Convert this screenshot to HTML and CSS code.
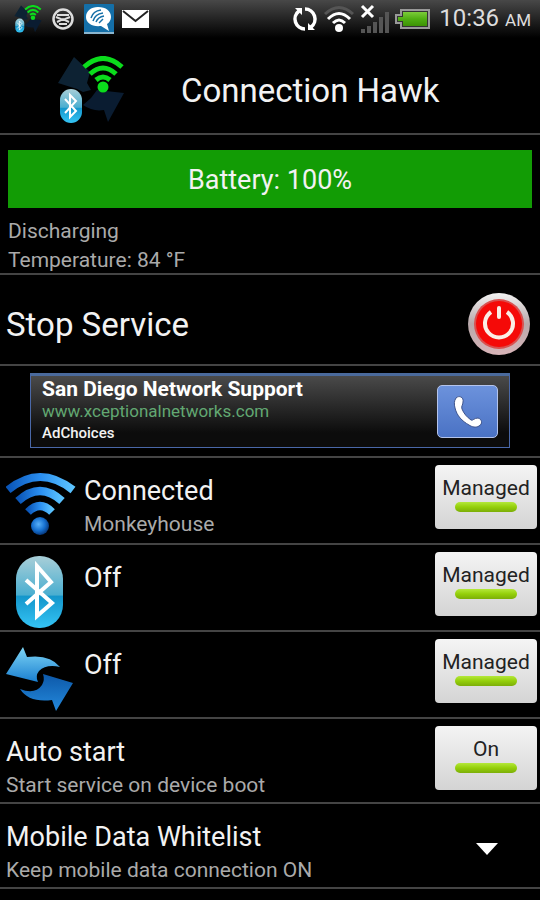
FILE: index.html
```html
<!DOCTYPE html>
<html lang="en">

<head>
    <meta charset="UTF-8">
    <meta name="viewport" content="width=device-width, initial-scale=1.0">
    <title>Connection Hawk</title>
    <link rel="stylesheet" href="styles.css">
</head>

<body>
    <!-- shared gradients and symbols -->
    <svg class="defs" width="0" height="0" aria-hidden="true">
        <defs>
            <linearGradient id="pill" x1="0" y1="0" x2="0" y2="1">
                <stop offset="0" stop-color="#a9cfd8" />
                <stop offset="0.54" stop-color="#4aaed0" />
                <stop offset="0.56" stop-color="#1496cb" />
                <stop offset="1" stop-color="#35c4f5" />
            </linearGradient>
            <linearGradient id="wave" x1="0" y1="0" x2="1" y2="0">
                <stop offset="0" stop-color="#0a55b8" />
                <stop offset="0.5" stop-color="#2a8ef0" />
                <stop offset="1" stop-color="#5cc4ff" />
            </linearGradient>
            <radialGradient id="ball" cx="0.42" cy="0.4" r="0.6">
                <stop offset="0" stop-color="#58b0f8" />
                <stop offset="0.6" stop-color="#1670d0" />
                <stop offset="1" stop-color="#073a80" />
            </radialGradient>
            <linearGradient id="arrowLight" x1="0" y1="0" x2="0" y2="1">
                <stop offset="0" stop-color="#7fd6f6" />
                <stop offset="1" stop-color="#1a7fd0" />
            </linearGradient>
            <linearGradient id="arrowDark" x1="0" y1="0" x2="0" y2="1">
                <stop offset="0" stop-color="#0d58a8" />
                <stop offset="1" stop-color="#2489dc" />
            </linearGradient>
            <linearGradient id="silver" x1="0" y1="0" x2="0" y2="1">
                <stop offset="0" stop-color="#f2f2f2" />
                <stop offset="0.5" stop-color="#b8a8aa" />
                <stop offset="1" stop-color="#d8b4b8" />
            </linearGradient>
            <linearGradient id="cell" x1="0" y1="0" x2="0" y2="1">
                <stop offset="0" stop-color="#7ccc3a" />
                <stop offset="0.5" stop-color="#4fae12" />
                <stop offset="1" stop-color="#3c9205" />
            </linearGradient>
            <symbol id="hawk" viewBox="0 0 68 68">
                <path d="M17 1 L33 16 L30 27 L34 34 L26 36 L20 33 L1 27 Z" fill="#0d2233" />
                <path d="M26 49 L34 42 L40 34 L67 37 L51 66 L47 54 Q36 56 26 49 Z" fill="#0a1c31" />
                <g fill="none" stroke="#0bdc1c" stroke-width="5">
                    <path d="M27 11 Q46 -6 65 11" />
                    <path d="M33 18 Q46 6 59 18" />
                    <path d="M39 24 Q46 18 53 24" />
                </g>
                <circle cx="46" cy="31" r="5.5" fill="#0bdc1c" />
                <rect x="3" y="33" width="22" height="34" rx="11" fill="url(#pill)" />
                <path d="M8 43 L19 55 L13 61 V39 L19 45 L8 57" fill="none" stroke="#fff" stroke-width="2" />
            </symbol>
        </defs>
    </svg>

    <div class="status-bar">
        <div class="status-left">
            <svg width="28" height="28"><use href="#hawk" /></svg>
            <svg width="22" height="22" viewBox="0 0 22 22" fill="none" stroke="#ddd">
                <circle cx="11" cy="11" r="9.5" stroke-width="2.5" />
                <path d="M5 7 H17 M7 16 H15" stroke-width="2" />
                <path d="M4 9 L11 12 L18 9 M5 14 L11 11 L17 14" stroke-width="2" />
            </svg>
            <svg width="30" height="30" viewBox="0 0 30 30">
                <rect width="30" height="30" rx="1" fill="#146fa8" />
                <path d="M0 29 H30" stroke="#8bb6cf" stroke-width="2" />
                <path d="M14 3 C22 3 27 7 27 13 C27 16 25 19 23 20 L25 27 L17 22 C8 23 2 19 2 13 C2 7 7 3 14 3 Z" fill="#fff" />
                <g fill="none" stroke="#146fa8" stroke-width="1.5">
                    <path d="M7 14 Q9 7 17 6" />
                    <path d="M9 17 Q11 10 19 9" />
                    <path d="M12 18 Q14 13 20 12" />
                    <path d="M15 19 L19 15" />
                </g>
            </svg>
            <svg class="icon-mail" width="27" height="18" viewBox="0 0 27 18">
                <rect width="27" height="18" fill="#fff" />
                <path d="M1 1 L13.500 11 L26 1" fill="none" stroke="#222" stroke-width="2" />
            </svg>
        </div>
        <div class="status-right">
            <svg width="26" height="26" viewBox="0 0 26 26">
                <g fill="none" stroke="#fff" stroke-width="3.5">
                    <path d="M13 3 A10 10 0 0 1 19 21" />
                    <path d="M13 23 A10 10 0 0 1 7 5" />
                </g>
                <path d="M3 2 H10 V9 Z M23 24 H16 V17 Z" fill="#fff" />
            </svg>
            <svg width="32" height="28" viewBox="0 0 32 28">
                <g fill="none" stroke-width="3">
                    <path d="M2 9 Q16 -4 30 9" stroke="#555" />
                    <path d="M5 14 Q16 3 27 14" stroke="#fff" />
                    <path d="M10 18 Q16 12 22 18" stroke="#fff" />
                </g>
                <circle cx="16" cy="23" r="4" fill="#fff" />
            </svg>
            <svg width="30" height="30" viewBox="0 0 30 30">
                <g fill="#555">
                    <rect x="1" y="25" width="4" height="4" />
                    <rect x="7" y="22" width="4" height="7" />
                    <rect x="13" y="18" width="4" height="11" />
                    <rect x="19" y="13" width="4" height="16" />
                    <rect x="25" y="8" width="4" height="21" />
                </g>
                <path d="M2 2 L13 13 M13 2 L2 13" stroke="#fff" stroke-width="3" />
            </svg>
            <svg width="35" height="20" viewBox="0 0 35 20">
                <path d="M6 1 H34 V19 H6 V14 H1 V6 H6 Z" fill="#333" stroke="#999" stroke-width="2" />
                <path d="M8 3 H32 V17 H8 V12 H3 V8 H8 Z" fill="url(#cell)" />
            </svg>
            <p class="clock">10:36 <span>AM</span></p>
        </div>
    </div>

    <header class="header">
        <svg width="68" height="68"><use href="#hawk" /></svg>
        <h1>Connection Hawk</h1>
    </header>

    <main>
        <section class="battery">
            <div class="battery-bar">Battery: 100%</div>
            <p>Discharging</p>
            <p>Temperature: 84 °F</p>
        </section>

        <section class="row service">
            <h2>Stop Service</h2>
            <button type="button" class="power" aria-label="Stop Service">
                <svg width="64" height="64" viewBox="0 0 64 64">
                    <circle cx="32" cy="32" r="31" fill="url(#silver)" />
                    <circle cx="32" cy="32" r="25" fill="#d9504f" />
                    <circle cx="32" cy="32" r="23" fill="#f50a08" />
                    <path d="M24 20 A14 14 0 1 0 40 20" fill="none" stroke="#fbeee6" stroke-width="4" />
                    <path d="M32 16 V25" stroke="#fbeee6" stroke-width="4" stroke-linecap="round" />
                </svg>
            </button>
        </section>

        <section class="ad-row">
            <div class="ad">
                <div class="ad-text">
                    <h3>San Diego Network Support</h3>
                    <a class="ad-link" href="#">www.xceptionalnetworks.com</a>
                    <p>AdChoices</p>
                </div>
                <button type="button" class="call" aria-label="Call">
                    <svg width="32" height="36" viewBox="0 0 32 36">
                        <path d="M4 4 C7 1 12 3 11 8 C11 11 9 12 10 15 C12 20 15 23 19 26 C21 27 22 24 26 24 C30 25 31 30 27 32 C24 34 20 33 17 31 C10 27 5 22 3 14 C2 10 2 7 4 4 Z" fill="#fff" stroke="#3d538c" stroke-width="1" />
                    </svg>
                </button>
            </div>
        </section>

        <section class="row">
            <svg class="row-icon" width="72" height="72" viewBox="0 0 72 72">
                <g fill="none" stroke="url(#wave)" stroke-width="8">
                    <path d="M2 21 Q34 -5 67 21" />
                    <path d="M12 32 Q34 12 56 32" />
                    <path d="M22 43 Q34 31 46 43" />
                </g>
                <circle cx="34" cy="57" r="9" fill="url(#ball)" />
            </svg>
            <div class="row-text">
                <h3>Connected</h3>
                <p>Monkeyhouse</p>
            </div>
            <button type="button" class="toggle" aria-pressed="true">Managed</button>
        </section>

        <section class="row">
            <svg class="row-icon" width="72" height="72" viewBox="0 0 72 72">
                <rect x="10" y="0" width="47" height="72" rx="23" fill="url(#pill)" />
                <path d="M20 24 L46 47 L31 60 V10 L45 26 L20 48" fill="none" stroke="#fff" stroke-width="4" />
            </svg>
            <div class="row-text">
                <h3>Off</h3>
            </div>
            <button type="button" class="toggle" aria-pressed="true">Managed</button>
        </section>

        <section class="row">
            <svg class="row-icon" width="72" height="72" viewBox="0 0 72 72">
                <path d="M17 4 L21 14 Q44 11 54 24 Q40 21 33 28 Q29 33 32 39 L0 31 Z" fill="url(#arrowLight)" />
                <path d="M14 46 Q29 52 36 42 Q39 37 37 31 L67 40 L50 68 L46 57 Q23 60 14 46 Z" fill="url(#arrowDark)" />
            </svg>
            <div class="row-text">
                <h3>Off</h3>
            </div>
            <button type="button" class="toggle" aria-pressed="true">Managed</button>
        </section>

        <section class="row short">
            <div class="row-text">
                <h3>Auto start</h3>
                <p>Start service on device boot</p>
            </div>
            <button type="button" class="toggle" aria-pressed="true">On</button>
        </section>

        <section class="row short">
            <div class="row-text">
                <h3>Mobile Data Whitelist</h3>
                <p>Keep mobile data connection ON</p>
            </div>
            <button type="button" class="expand" aria-label="Mobile Data Whitelist">
                <svg width="22" height="12" viewBox="0 0 22 12">
                    <path d="M0 0 H22 L11 12 Z" fill="#fff" />
                </svg>
            </button>
        </section>
    </main>
</body>

</html>
```
FILE: styles.css
```css
* {
    box-sizing: border-box;
    margin: 0;
    padding: 0;
}

body {
    background-color: #000;
    color: #f2f2f2;
    font-family: Roboto, 'Liberation Sans', sans-serif;
}

h1,
h2,
h3 {
    font-weight: 400;
}

button {
    border: none;
    background: none;
    font-family: inherit;
    cursor: pointer;
}

svg {
    display: block;
    flex-shrink: 0;
}

.defs {
    position: absolute;
}

/*STATUS BAR*/
.status-bar {
    display: flex;
    justify-content: space-between;
    align-items: center;
    height: 38px;
    padding: 0 9px 0 14px;
    background: linear-gradient(#484848, #1c1c1c 60%, #000);
}

.status-left {
    display: flex;
    align-items: center;
    gap: 10px;
}

.icon-mail {
    margin-left: -2px;
}

.status-right {
    display: flex;
    align-items: center;
    gap: 5px;
}

.clock {
    font-size: 24px;
    line-height: 40px;
    color: #ddd;
    margin-left: 4px;
}

.clock span {
    font-size: 17px;
}

/*HEADER*/
.header {
    display: flex;
    align-items: center;
    gap: 56px;
    height: 97px;
    padding: 8px 56px 0 57px;
    border-bottom: 2px solid #444;
}

.header h1 {
    font-size: 33px;
    line-height: 40px;
    padding-top: 2px;
}

/*BATTERY*/
.battery {
    padding: 15px 8px 0;
    height: 140px;
    border-bottom: 2px solid #444;
}

.battery-bar {
    height: 58px;
    margin-bottom: 9px;
    background-color: #129c05;
    font-size: 27px;
    line-height: 60px;
    text-align: center;
}

.battery p {
    font-size: 21px;
    line-height: 29px;
    color: #aaa;
}

/*ROWS*/
.row {
    display: flex;
    align-items: flex-start;
    min-height: 87px;
    padding: 7px 3px 0 6px;
    border-bottom: 2px solid #444;
}

.short {
    min-height: 85px;
}

.row-icon {
    margin-top: 4px;
    margin-right: 6px;
}

.row-text {
    flex: 1;
    padding-top: 8px;
}

.row-text h3 {
    font-size: 27px;
    line-height: 36px;
}

.row-text p {
    font-size: 21px;
    line-height: 30px;
    color: #aaa;
}

.toggle {
    display: flex;
    flex-direction: column;
    align-items: center;
    width: 102px;
    height: 64px;
    padding-top: 9px;
    border-radius: 4px;
    background: linear-gradient(#f4f4f4, #d4d4d4);
    font-size: 21px;
    line-height: 28px;
    color: #222;
}

.toggle::after {
    content: "";
    width: 62px;
    height: 10px;
    border-radius: 5px;
    background: linear-gradient(#b4e83a, #94cf0a 50%, #7cae08);
}

.expand {
    padding: 32px 39px 0;
}

.service {
    align-items: center;
    min-height: 91px;
    padding-top: 8px;
}

.service h2 {
    flex: 1;
    font-size: 33px;
    line-height: 40px;
    padding-top: 2px;
}

.power {
    margin-right: 6px;
}

/*AD*/
.ad-row {
    padding: 7px 30px 8px;
    border-bottom: 2px solid #444;
}

.ad {
    display: flex;
    justify-content: space-between;
    align-items: center;
    height: 75px;
    padding: 0 11px;
    border: 1px solid #4a68a8;
    border-top: 3px solid #4a6a9c;
    background: linear-gradient(#4a4a4a, #0c0c0c 80%);
}

.ad-text {
    padding-bottom: 2px;
}

.ad h3 {
    font-size: 21px;
    line-height: 22px;
    font-weight: 700;
    color: #fff;
}

.ad-link {
    display: block;
    font-size: 17px;
    line-height: 22px;
    color: #62a872;
    text-decoration: none;
}

.ad p {
    font-size: 15px;
    line-height: 22px;
    font-weight: 500;
}

.call {
    display: flex;
    justify-content: center;
    align-items: center;
    width: 61px;
    height: 53px;
    border: 1px solid #b4c4ec;
    border-radius: 5px;
    background: linear-gradient(#6c92dc, #4a72c4);
}
```
